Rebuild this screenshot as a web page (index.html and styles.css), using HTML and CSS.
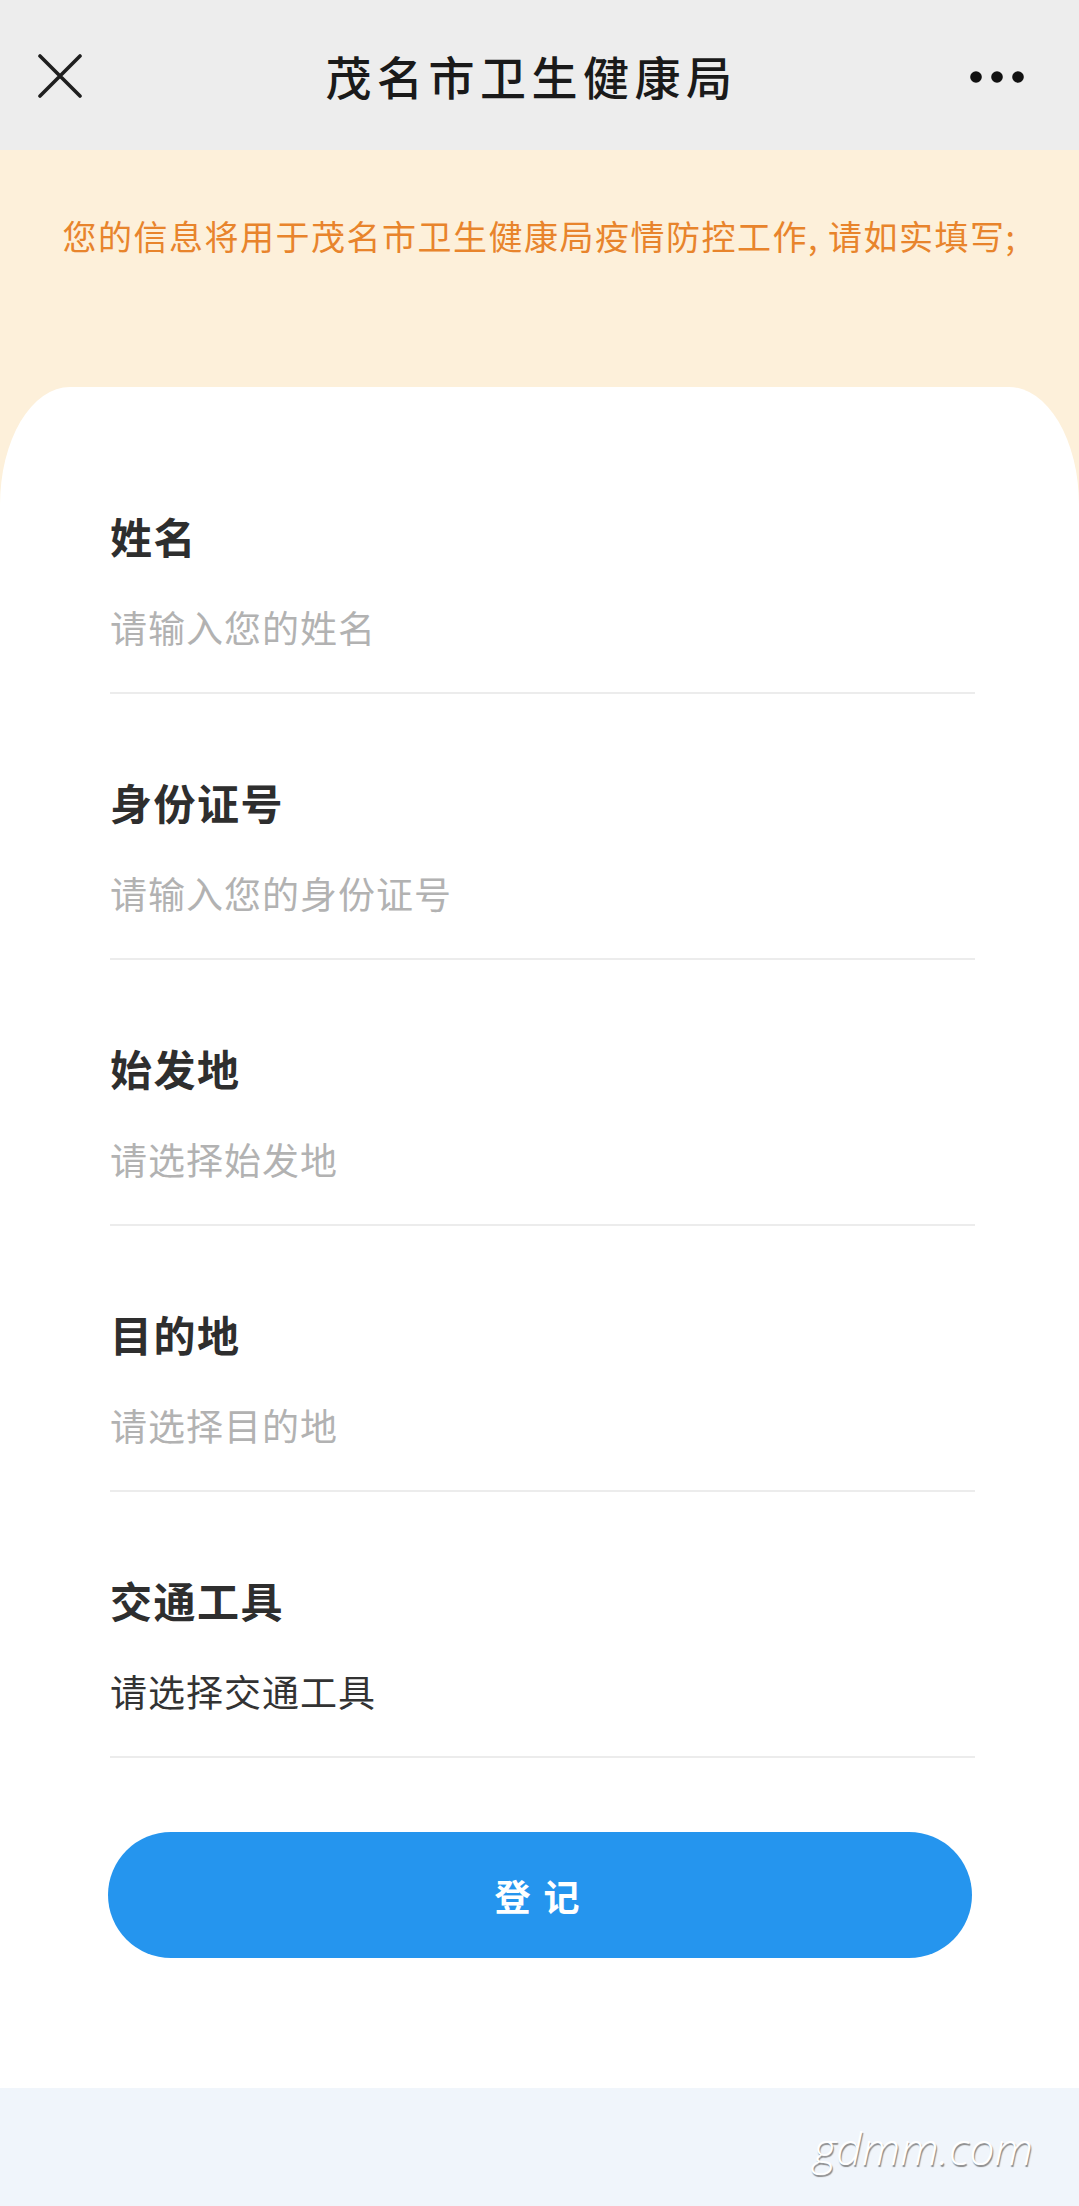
FILE: index.html
```html
<!DOCTYPE html>
<html>
<head>
  <meta charset="UTF-8">
  <title>茂名市卫生健康局</title>
  <link rel="stylesheet" href="styles.css">
</head>
<body>
  <div class="navbar">
    <div class="nav-close">
      <svg width="44" height="44" viewBox="0 0 44 44">
        <path d="M2 2 L42 42 M42 2 L2 42" stroke="#1f1f1f" stroke-width="3.6" stroke-linecap="round" fill="none"/>
      </svg>
    </div>
    <div class="nav-title">茂名市卫生健康局</div>
    <div class="nav-more">
      <svg width="56" height="14" viewBox="0 0 56 14">
        <circle cx="7" cy="7" r="5.8" fill="#111"/>
        <circle cx="28" cy="7" r="5.8" fill="#111"/>
        <circle cx="49" cy="7" r="5.8" fill="#111"/>
      </svg>
    </div>
  </div>

  <div class="page">
    <div class="notice">您的信息将用于茂名市卫生健康局疫情防控工作, 请如实填写;</div>

    <div class="card">
      <div class="field">
        <div class="field-label">姓名</div>
        <div class="field-value placeholder">请输入您的姓名</div>
      </div>
      <div class="field">
        <div class="field-label">身份证号</div>
        <div class="field-value placeholder">请输入您的身份证号</div>
      </div>
      <div class="field">
        <div class="field-label">始发地</div>
        <div class="field-value placeholder">请选择始发地</div>
      </div>
      <div class="field">
        <div class="field-label">目的地</div>
        <div class="field-value placeholder">请选择目的地</div>
      </div>
      <div class="field">
        <div class="field-label">交通工具</div>
        <div class="field-value">请选择交通工具</div>
      </div>

      <button class="submit-btn">登记</button>
    </div>
  </div>

  <footer class="footer">
    <span class="watermark">gdmm.com</span>
  </footer>
</body>
</html>
```

FILE: styles.css
```css
body {
  margin: 0;
  font-family: "Noto Sans CJK SC", "Noto Sans", sans-serif;
  background: #f0f5fb;
}

.navbar {
  height: 150px;
  background: #ededed;
  display: flex;
  align-items: center;
  padding: 0 54px 0 38px;
  box-sizing: border-box;
}

.nav-close {
  width: 44px;
  height: 44px;
  margin-top: 2px;
}

.nav-title {
  flex: 1;
  text-align: center;
  font-size: 46px;
  font-weight: 500;
  letter-spacing: 5.5px;
  color: #1a1a1a;
  padding-left: 12px;
}

.nav-more {
  width: 56px;
  height: 14px;
  margin-top: 4px;
}

.nav-more svg,
.nav-close svg {
  display: block;
}

.page {
  background: #fdf0da;
}

.notice {
  height: 237px;
  padding-top: 62px;
  box-sizing: border-box;
  text-align: center;
  font-size: 34px;
  line-height: 48px;
  letter-spacing: 1.5px;
  color: #e8842c;
}

.card {
  background: #fff;
  border-radius: 70px 70px 0 0 / 118px 118px 0 0;
  padding: 119px 104px 130px 110px;
}

.field {
  border-bottom: 2px solid #ececec;
  padding-bottom: 35px;
  margin-bottom: 78px;
}

.field:last-of-type {
  margin-bottom: 74px;
}

.field-label {
  font-size: 42px;
  line-height: 60px;
  font-weight: bold;
  letter-spacing: 1.5px;
  color: #2e2e2e;
}

.field-value {
  margin-top: 31px;
  font-size: 37px;
  line-height: 60px;
  letter-spacing: 1px;
  color: #333;
}

.field-value.placeholder {
  color: #b2b2b2;
}

.submit-btn {
  display: block;
  width: 864px;
  height: 126px;
  margin-left: -2px;
  border: none;
  border-radius: 63px;
  background: #2595ee;
  color: #fff;
  font-family: inherit;
  font-size: 36px;
  font-weight: bold;
  letter-spacing: 13px;
  padding-left: 13px;
  cursor: pointer;
}

.footer {
  height: 118px;
  display: flex;
  align-items: center;
  justify-content: flex-end;
  padding-right: 46px;
}

.watermark {
  font-family: "Open Sans", sans-serif;
  font-style: italic;
  font-weight: 300;
  font-size: 45px;
  color: #fff;
  text-shadow: 1px 2px 1px #8a8a8a;
}
```
